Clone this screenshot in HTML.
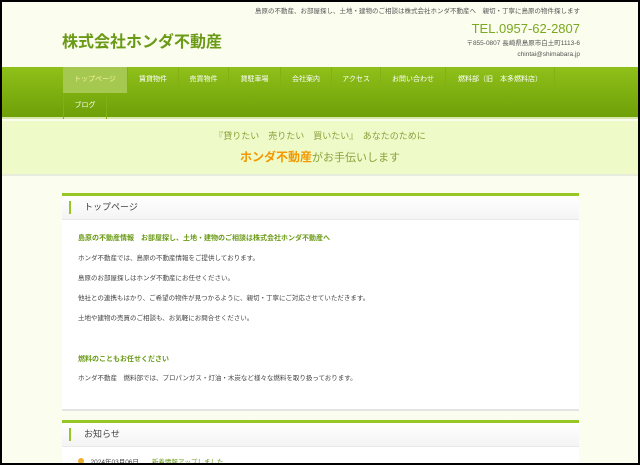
<!DOCTYPE html>
<html><head><meta charset="utf-8"><style>
*{margin:0;padding:0;box-sizing:border-box}
html,body{width:640px;height:465px;overflow:hidden;background:#000}
body{font-family:"Liberation Sans","Noto Sans CJK JP",sans-serif;}
#pg{position:absolute;left:2px;top:2px;width:636px;height:461px;background:#fbfdee;overflow:hidden}
.tag{position:absolute;right:58px;top:3px;font-size:6.5px;color:#555}
.logo{position:absolute;left:60px;top:26px;font-size:16px;font-weight:bold;color:#6a9a16}
.tel{position:absolute;right:58px;top:19px;font-size:13px;color:#7aa81e}
.adr{position:absolute;right:58px;top:36px;font-size:6.5px;color:#555;text-align:right;line-height:11px}
.nav{position:absolute;left:0;top:65px;width:636px;height:52px;background:linear-gradient(#8fc01a,#6ea008);border-bottom:2px solid #d8e8a8}
.nav a{position:absolute;height:26px;line-height:26px;font-size:7px;color:#fff;text-align:center;border-right:1px solid #83b012}
.nav a.on{background:#a5c850;color:#f5f0a0}
.ban{position:absolute;left:0;top:119px;width:636px;height:55px;background:#eefbc8;border-bottom:2px solid #e8ecdc;text-align:center}
.b1{font-size:9px;color:#8aa03a;margin-top:8px}
.b2{font-size:11px;color:#8aa03a;margin-top:6px}
.b2 b{color:#f39800;font-size:12px}
.box{position:absolute;left:60px;width:517px;background:#fff;border-top:3px solid #95c824;box-shadow:0 2px 0 #e4e4e4}
.hd{height:24px;background:linear-gradient(#fff,#f4f4f4);border-bottom:1px solid #e8e8e8;font-size:9px;color:#444;line-height:23px;padding-left:22px;position:relative}
.hd:before{content:"";position:absolute;left:7px;top:5px;width:2px;height:13px;background:#95c824}
.bd{padding:11px 16px 9px;font-size:6.5px;color:#444;line-height:9px}
.bd h4{color:#6a9a16;font-size:7px;margin:3px 0 11px}
.bd p{margin-bottom:11px}
</style></head><body><div id="pg">
<div class="tag">島原の不動産、お部屋探し、土地・建物のご相談は株式会社ホンダ不動産へ　親切・丁寧に島原の物件探します</div>
<div class="logo">株式会社ホンダ不動産</div>
<div class="tel">TEL.0957-62-2807</div>
<div class="adr">〒855-0807 長崎県島原市白土町1113-6<br>chintai@shimabara.jp</div>
<div class="nav">
<a class="on" style="left:61px;width:65px;top:0">トップページ</a>
<a style="left:126px;width:51px;top:0">賃貸物件</a>
<a style="left:177px;width:50px;top:0">売買物件</a>
<a style="left:227px;width:52px;top:0">貸駐車場</a>
<a style="left:279px;width:51px;top:0">会社案内</a>
<a style="left:330px;width:49px;top:0">アクセス</a>
<a style="left:379px;width:65px;top:0">お問い合わせ</a>
<a style="left:444px;width:109px;top:0">燃料部（旧　本多燃料店）</a>
<a style="left:61px;width:44px;top:26px;border-left:1px solid #83b012">ブログ</a>
</div>
<div class="ban"><div class="b1">『貸りたい　売りたい　買いたい』　あなたのために</div><div class="b2"><b>ホンダ不動産</b>がお手伝いします</div></div>
<div class="box" style="top:191px;height:216px"><div class="hd">トップページ</div><div class="bd">
<h4>島原の不動産情報　お部屋探し、土地・建物のご相談は株式会社ホンダ不動産へ</h4>
<p>ホンダ不動産では、島原の不動産情報をご提供しております。</p>
<p>島原のお部屋探しはホンダ不動産にお任せください。</p>
<p>他社との連携もはかり、ご希望の物件が見つかるように、親切・丁寧にご対応させていただきます。</p>
<p>土地や建物の売買のご相談も、お気軽にお問合せください。</p>
<h4 style="margin-top:32px;margin-bottom:10px">燃料のこともお任せください</h4>
<p>ホンダ不動産　燃料部では、プロパンガス・灯油・木炭など様々な燃料を取り扱っております。</p>
</div></div>
<div class="box" style="top:418px;height:60px"><div class="hd">お知らせ</div><div class="bd"><span style="display:inline-block;width:6px;height:6px;border-radius:3px;background:#f0b030"></span>　2024年03月06日　　<span style="color:#6a9a16">新着情報アップしました</span></div></div>
</div></body></html>
